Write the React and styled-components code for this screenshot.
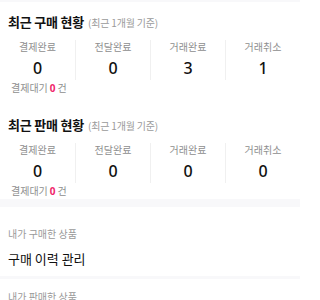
import React from "react";
import styled, { createGlobalStyle } from "styled-components";

const Global = createGlobalStyle`
  html, body { margin: 0; padding: 0; background: #fff; }
  body { font-family: "Noto Sans CJK KR", "Noto Sans", sans-serif; color: #111; }
`;

const Page = styled.div`
  width: 300px;
  display: flex;
  flex-direction: column;
`;

const Band = styled.div`
  height: ${(p) => p.h}px;
  background: #f8f8fa;
`;

const Section = styled.section`
  padding: ${(p) => p.pad};
`;

const Title = styled.h2`
  margin: 0;
  padding-left: 8px;
  font-size: 13px;
  font-weight: 700;
  line-height: 20px;
  color: #111;
  letter-spacing: -0.2px;
`;

const Sub = styled.span`
  font-size: 10px;
  font-weight: 400;
  color: #9a9a9a;
  margin-left: 4px;
`;

const Grid = styled.div`
  display: grid;
  grid-template-columns: repeat(4, 1fr);
  margin-top: 7px;
`;

const Cell = styled.div`
  display: flex;
  flex-direction: column;
  align-items: center;
  border-left: ${(p) => (p.first ? "none" : "1px solid #f0f0f0")};
`;

const Label = styled.div`
  font-size: 10px;
  line-height: 14px;
  color: #8e8e8e;
`;

const Num = styled.div`
  font-family: "Noto Sans", sans-serif;
  font-size: 16px;
  font-weight: 500;
  line-height: 24px;
  margin-top: 2px;
  color: #111;
`;

const Waiting = styled.div`
  padding-left: 11px;
  margin-top: 1px;
  font-size: 10px;
  line-height: 14px;
  color: #8e8e8e;
`;

const Pink = styled.b`
  color: #f0266b;
  font-family: "Noto Sans", sans-serif;
  font-weight: 700;
  margin: 0 2px;
`;

const Caption = styled.div`
  padding-left: 8px;
  font-size: 10px;
  line-height: 14px;
  color: #9a9a9a;
`;

const Link = styled.div`
  padding-left: 8px;
  margin-top: 9px;
  font-size: 13px;
  line-height: 18px;
  color: #111;
`;

function Status({ title, data, pad }) {
  return (
    <Section pad={pad}>
      <Title>
        {title}
        <Sub>(최근 1개월 기준)</Sub>
      </Title>
      <Grid>
        {data.map(([l, n], i) => (
          <Cell key={l} first={i === 0}>
            <Label>{l}</Label>
            <Num>{n}</Num>
          </Cell>
        ))}
      </Grid>
      <Waiting>
        결제대기<Pink>0</Pink>건
      </Waiting>
    </Section>
  );
}

export default function App() {
  return (
    <Page>
      <Global />
      <Band h={2} />
      <Status
        pad="10px 0 0"
        title="최근 구매 현황"
        data={[["결제완료", 0], ["전달완료", 0], ["거래완료", 3], ["거래취소", 1]]}
      />
      <Status
        pad="20px 0 0"
        title="최근 판매 현황"
        data={[["결제완료", 0], ["전달완료", 0], ["거래완료", 0], ["거래취소", 0]]}
      />
      <Section pad="1px 0 0">
        <Band h={8} />
      </Section>
      <Section pad="20px 0 0">
        <Caption>내가 구매한 상품</Caption>
        <Link>구매 이력 관리</Link>
      </Section>
      <Section pad="8px 0 0">
        <Band h={3} />
      </Section>
      <Section pad="11px 0 0">
        <Caption>내가 판매한 상품</Caption>
      </Section>
    </Page>
  );
}
